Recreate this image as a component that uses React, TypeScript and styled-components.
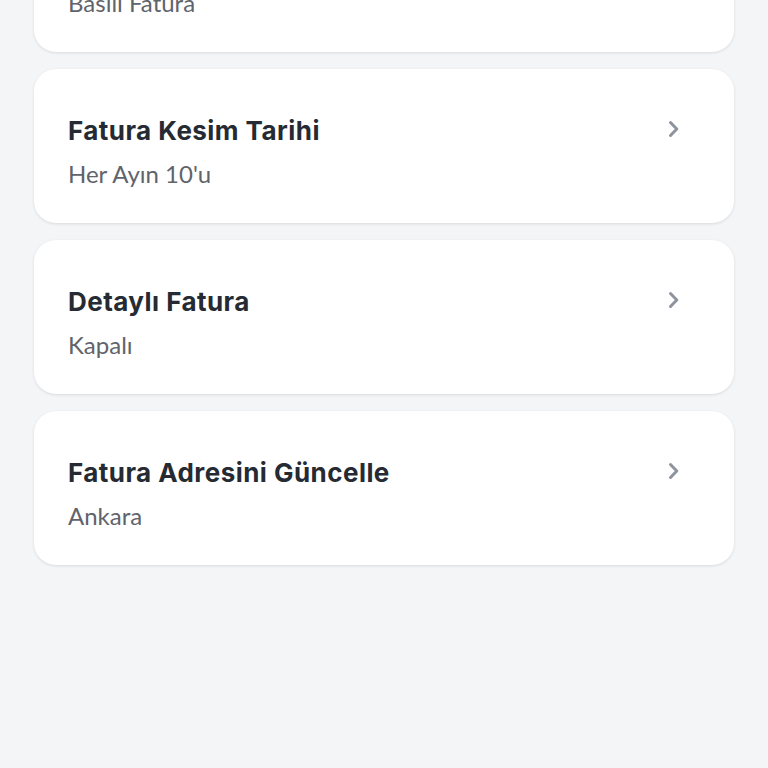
import React from "react";
import styled, { createGlobalStyle } from "styled-components";

const Global = createGlobalStyle`
  html, body { margin: 0; padding: 0; background: #f4f5f7; }
  body { font-family: "Lato", "Noto Sans", sans-serif; overflow: hidden; }
  * { box-sizing: border-box; }
`;

const Page = styled.div`
  width: 768px;
  height: 768px;
  background: #f4f5f7;
  overflow: hidden;
`;

const List = styled.div`
  display: flex;
  flex-direction: column;
  gap: 17px;
  padding: 0 34px;
  margin-top: -102px;
`;

const Card = styled.div`
  background: #ffffff;
  border-radius: 22px;
  box-shadow: 0 1px 3px rgba(20, 30, 45, 0.12);
  height: 154px;
  padding: 46px 34px 0 34px;
  display: flex;
  align-items: flex-start;
  justify-content: space-between;
`;

const Texts = styled.div`
  display: flex;
  flex-direction: column;
  gap: 12px;
`;

const Title = styled.div`
  font-family: "Inter", "Lato", sans-serif;
  font-size: 26px;
  line-height: 32px;
  font-weight: 650;
  letter-spacing: 0.45px;
  color: #262b33;
`;

const Sub = styled.div`
  font-size: 24px;
  line-height: 30px;
  font-weight: 400;
  color: #5f646b;
`;

const Chevron = styled.svg`
  width: 20px;
  height: 20px;
  margin-top: 4px;
  margin-right: 16px;
  flex-shrink: 0;
`;

const items = [
  { title: "Fatura Tipi", sub: "Basılı Fatura" },
  { title: "Fatura Kesim Tarihi", sub: "Her Ayın 10'u" },
  { title: "Detaylı Fatura", sub: "Kapalı" },
  { title: "Fatura Adresini Güncelle", sub: "Ankara" },
];

export default function App() {
  return (
    <Page>
      <Global />
      <List>
        {items.map((it) => (
          <Card key={it.title}>
            <Texts>
              <Title>{it.title}</Title>
              <Sub>{it.sub}</Sub>
            </Texts>
            <Chevron viewBox="0 0 20 20" fill="none">
              <path
                d="M6.5 3.5 L12.8 10 L6.5 16.5"
                stroke="#8d949e"
                strokeWidth="3"
                strokeLinecap="round"
                strokeLinejoin="round"
              />
            </Chevron>
          </Card>
        ))}
      </List>
    </Page>
  );
}
